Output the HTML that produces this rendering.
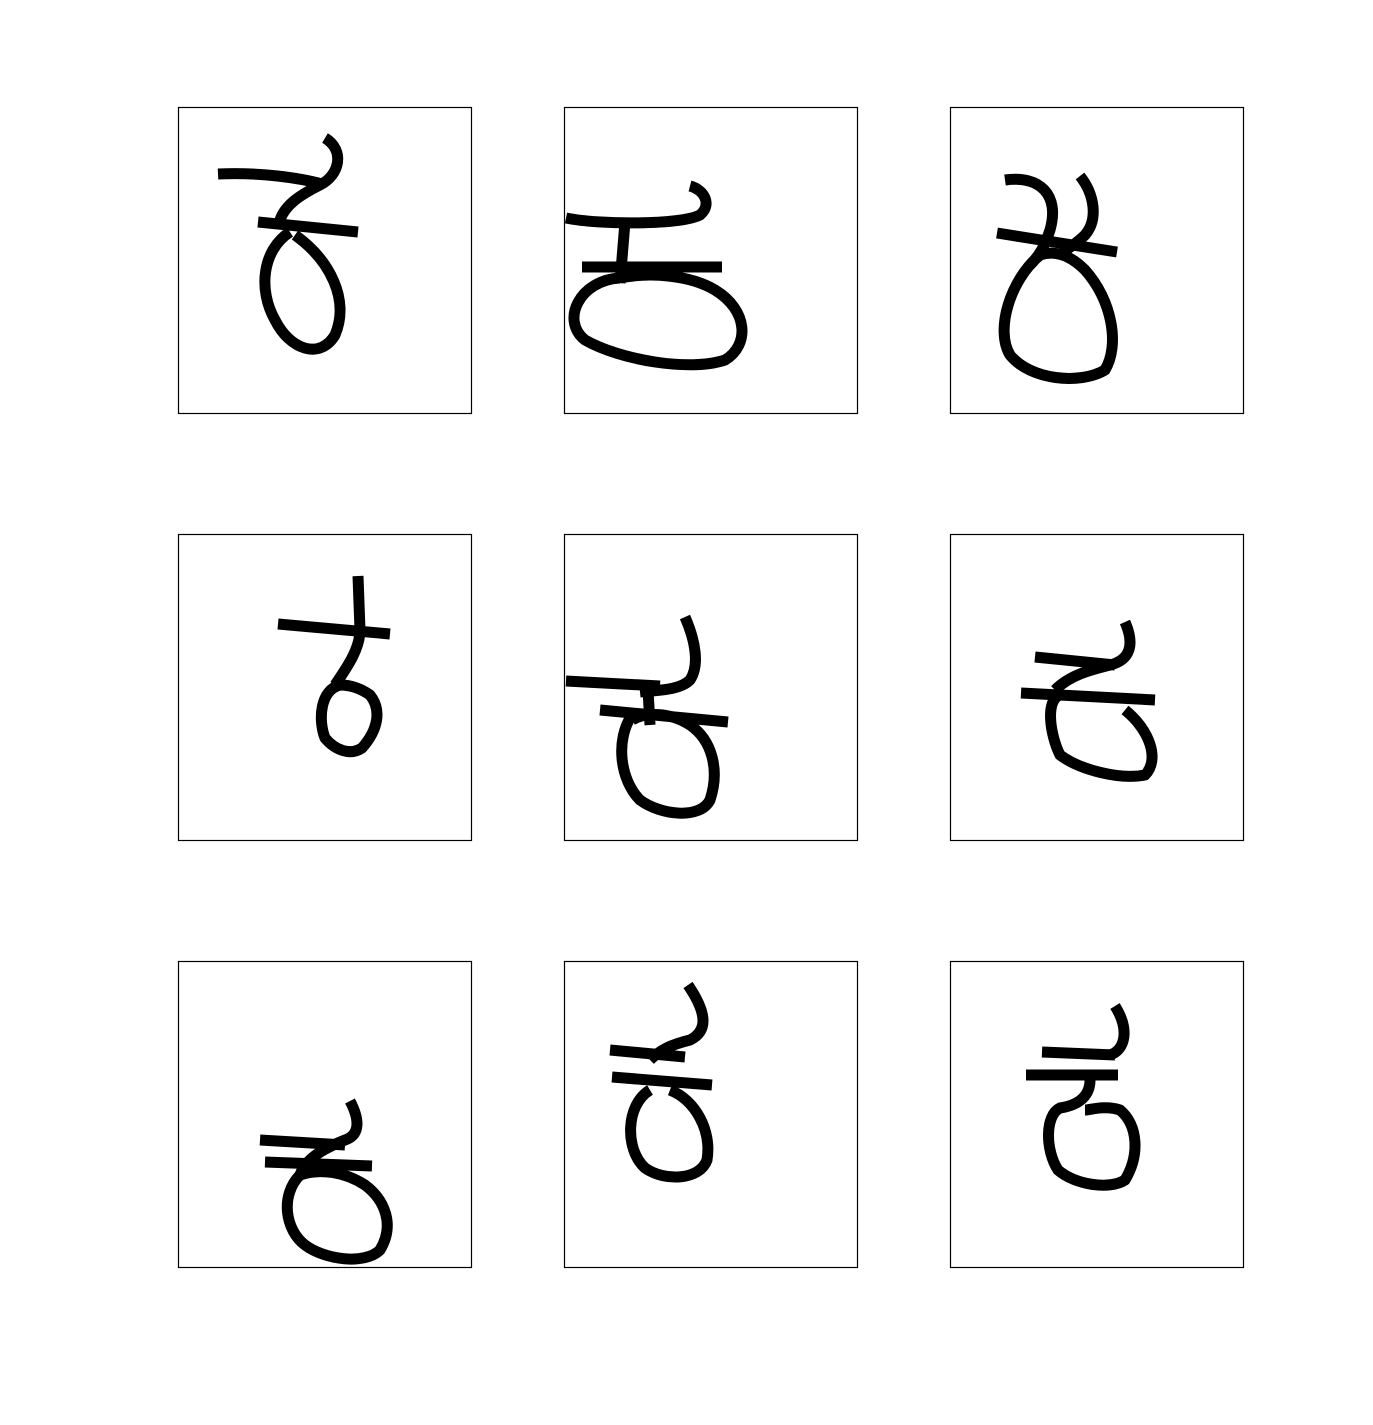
<!DOCTYPE html>
<html><head><meta charset="utf-8"><style>html,body{margin:0;padding:0;background:#fff}svg{display:block}</style></head>
<body>
<svg width="1373" height="1425" viewBox="0 0 1373 1425" xmlns="http://www.w3.org/2000/svg">
<rect width="1373" height="1425" fill="#fff"/>
<g fill="none" stroke="#000" stroke-width="1.2">
<rect x="178.5" y="107.5" width="293" height="306"/>
<rect x="564.5" y="107.5" width="293" height="306"/>
<rect x="950.5" y="107.5" width="293" height="306"/>
<rect x="178.5" y="534.5" width="293" height="306"/>
<rect x="564.5" y="534.5" width="293" height="306"/>
<rect x="950.5" y="534.5" width="293" height="306"/>
<rect x="178.5" y="961.5" width="293" height="306"/>
<rect x="564.5" y="961.5" width="293" height="306"/>
<rect x="950.5" y="961.5" width="293" height="306"/>
</g>
<g fill="none" stroke="#000" stroke-width="11" stroke-linejoin="round">
<!-- 1 -->
<path d="M218,174 C260,172 300,178 322,184"/>
<path d="M325,138 C345,150 340,175 320,185 C300,195 285,205 280,220"/>
<path d="M258,222 L358,232"/>
<path d="M290,232 C262,250 258,290 275,320 C290,350 320,360 335,335 C350,300 330,260 295,235"/>
<!-- 2 -->
<path d="M566,218 C600,225 680,225 700,215 C712,205 705,190 690,186"/>
<path d="M625,222 L620,283"/>
<path d="M582,267 L722,267"/>
<path d="M620,278 C580,280 560,320 585,340 C620,360 690,372 725,360 C750,345 748,310 715,290 C690,275 650,272 620,278"/>
<!-- 3 -->
<path d="M1005,180 C1040,175 1060,195 1050,230 C1045,245 1040,255 1030,265"/>
<path d="M1080,176 C1095,195 1098,220 1085,235 C1075,245 1065,250 1060,255"/>
<path d="M997,233 L1117,252"/>
<path d="M1040,255 C1010,280 995,330 1010,355 C1030,380 1080,385 1105,370 C1120,345 1112,300 1085,270 C1070,255 1055,250 1040,255"/>
<!-- 4 -->
<path d="M358,576 L360,630 C360,650 345,670 335,685"/>
<path d="M278,624 L390,634"/>
<path d="M340,685 C320,690 318,720 325,738 C335,750 350,756 362,748 C378,730 382,710 370,695 C360,688 350,685 340,685"/>
<!-- 5 -->
<path d="M685,617 C695,640 700,665 690,680 C680,690 660,690 640,692"/>
<path d="M566,681 L660,686"/>
<path d="M600,710 L728,722"/>
<path d="M648,690 L650,725"/>
<path d="M632,715 C615,740 620,780 640,800 C660,815 700,820 710,800 C720,770 712,740 690,725 C670,712 645,712 632,720"/>
<!-- 6 -->
<path d="M1125,622 C1135,645 1130,660 1110,665 C1090,670 1070,675 1055,690"/>
<path d="M1035,657 L1115,665"/>
<path d="M1021,693 L1155,700"/>
<path d="M1060,695 C1045,700 1050,735 1060,755 C1080,770 1120,780 1145,775 C1160,760 1150,730 1125,710"/>
<!-- 7 -->
<path d="M350,1101 C360,1120 360,1135 345,1140 C320,1150 305,1160 300,1175"/>
<path d="M260,1140 L345,1145"/>
<path d="M265,1162 L372,1166"/>
<path d="M300,1175 C280,1195 285,1230 305,1245 C325,1260 365,1265 380,1250 C395,1225 385,1200 365,1185 C345,1172 320,1168 300,1175"/>
<!-- 8 -->
<path d="M688,985 C705,1010 710,1030 690,1040 C670,1045 660,1050 650,1060"/>
<path d="M610,1050 L685,1057"/>
<path d="M612,1077 L712,1085"/>
<path d="M650,1090 C625,1105 625,1150 645,1168 C665,1182 700,1180 707,1160 C712,1130 695,1100 670,1090"/>
<!-- 9 -->
<path d="M1115,1006 C1130,1030 1125,1050 1110,1055"/>
<path d="M1042,1052 L1115,1055"/>
<path d="M1026,1075 L1118,1075"/>
<path d="M1090,1080 C1090,1095 1080,1105 1060,1108 C1045,1115 1045,1150 1058,1170 C1075,1185 1110,1190 1125,1180 C1140,1155 1138,1125 1120,1110 C1105,1105 1090,1110 1085,1110"/>
</g>
</svg>
</body></html>
